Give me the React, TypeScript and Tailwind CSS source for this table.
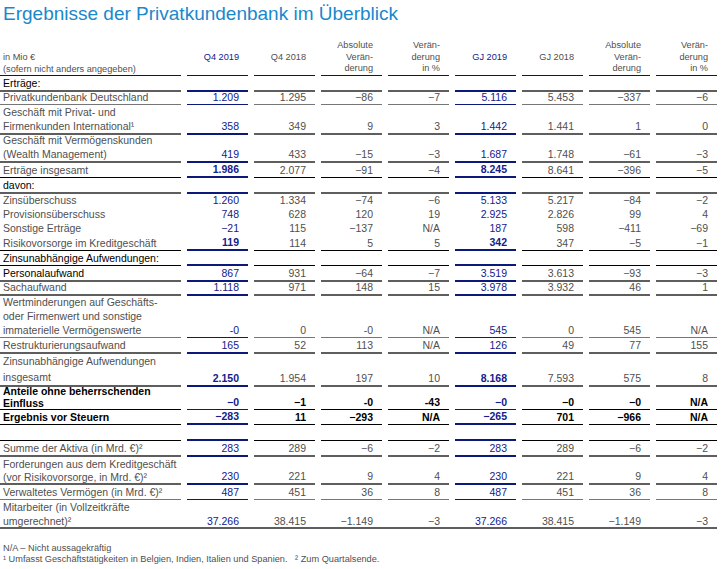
import React from "react";

type BK = "k1" | "g1" | "g2" | "n1" | "n2" | "none";

const BORDER: Record<BK, string> = {
  k1: "border-b border-black",
  g1: "border-b border-[#767676]",
  g2: "border-b-2 border-[#5e5e5e]",
  n1: "border-b border-[#0b1a7a]",
  n2: "border-b-2 border-[#0b1a7a]",
  none: "",
};

type Row = {
  label: string[];
  vals: string[];
  o: BK;
  hi: BK;
  h: string;
  lead?: string;
  black?: boolean;
  boldHi?: boolean;
  boldAll?: boolean;
  full?: boolean;
};

const E = ["", "", "", "", "", "", "", ""];

const rows: Row[] = [
  { label: ["Erträge:"], vals: E, o: "g2", hi: "n2", h: "h-[14px]", black: true },
  { label: ["Privatkundenbank Deutschland"], vals: ["1.209", "1.295", "−86", "−7", "5.116", "5.453", "−337", "−6"], o: "g1", hi: "n1", h: "h-[15px]" },
  { label: ["Geschäft mit Privat- und", "Firmenkunden International¹"], vals: ["358", "349", "9", "3", "1.442", "1.441", "1", "0"], o: "g2", hi: "n2", h: "h-[28px]" },
  { label: ["Geschäft mit Vermögenskunden", "(Wealth Management)"], vals: ["419", "433", "−15", "−3", "1.687", "1.748", "−61", "−3"], o: "g2", hi: "n2", h: "h-[29px]" },
  { label: ["Erträge insgesamt"], vals: ["1.986", "2.077", "−91", "−4", "8.245", "8.641", "−396", "−5"], o: "k1", hi: "n2", h: "h-[16px]", boldHi: true },
  { label: ["davon:"], vals: E, o: "g2", hi: "n2", h: "h-[15px]", black: true },
  { label: ["Zinsüberschuss"], vals: ["1.260", "1.334", "−74", "−6", "5.133", "5.217", "−84", "−2"], o: "none", hi: "none", h: "h-[14px]" },
  { label: ["Provisionsüberschuss"], vals: ["748", "628", "120", "19", "2.925", "2.826", "99", "4"], o: "none", hi: "none", h: "h-[14px]" },
  { label: ["Sonstige Erträge"], vals: ["−21", "115", "−137", "N/A", "187", "598", "−411", "−69"], o: "none", hi: "none", h: "h-[14px]" },
  { label: ["Risikovorsorge im Kreditgeschäft"], vals: ["119", "114", "5", "5", "342", "347", "−5", "−1"], o: "k1", hi: "n2", h: "h-[16px]", boldHi: true },
  { label: ["Zinsunabhängige Aufwendungen:"], vals: E, o: "k1", hi: "n2", h: "h-[15px]", black: true },
  { label: ["Personalaufwand"], vals: ["867", "931", "−64", "−7", "3.519", "3.613", "−93", "−3"], o: "g2", hi: "n2", h: "h-[14px]", black: true },
  { label: ["Sachaufwand"], vals: ["1.118", "971", "148", "15", "3.978", "3.932", "46", "1"], o: "g2", hi: "n2", h: "h-[15px]" },
  { label: ["Wertminderungen auf Geschäfts-", "oder Firmenwert und sonstige", "immaterielle Vermögenswerte"], vals: ["-0", "0", "-0", "N/A", "545", "0", "545", "N/A"], o: "g1", hi: "n1", h: "h-[43px]" },
  { label: ["Restrukturierungsaufwand"], vals: ["165", "52", "113", "N/A", "126", "49", "77", "155"], o: "g2", hi: "n2", h: "h-[15px]" },
  { label: ["Zinsunabhängige Aufwendungen", "insgesamt"], vals: ["2.150", "1.954", "197", "10", "8.168", "7.593", "575", "8"], o: "g2", hi: "n2", h: "h-[33px]", lead: "leading-[16px]", boldHi: true },
  { label: ["Anteile ohne beherrschenden", "Einfluss"], vals: ["−0", "−1", "-0", "-43", "−0", "−0", "−0", "N/A"], o: "k1", hi: "n1", h: "h-[23px]", lead: "leading-[11.5px]", black: true, boldAll: true },
  { label: ["Ergebnis vor Steuern"], vals: ["−283", "11", "−293", "N/A", "−265", "701", "−966", "N/A"], o: "k1", hi: "n2", h: "h-[16px]", black: true, boldAll: true },
  { label: [""], vals: E, o: "k1", hi: "n2", h: "h-[16px]" },
  { label: ["Summe der Aktiva (in Mrd. €)²"], vals: ["283", "289", "−6", "−2", "283", "289", "−6", "−2"], o: "g2", hi: "n2", h: "h-[16px]" },
  { label: ["Forderungen aus dem Kreditgeschäft", "(vor Risikovorsorge, in Mrd. €)²"], vals: ["230", "221", "9", "4", "230", "221", "9", "4"], o: "g2", hi: "n2", h: "h-[28px]", lead: "leading-[12.5px]" },
  { label: ["Verwaltetes Vermögen (in Mrd. €)²"], vals: ["487", "451", "36", "8", "487", "451", "36", "8"], o: "g1", hi: "n1", h: "h-[15px]" },
  { label: ["Mitarbeiter (in Vollzeitkräfte", "umgerechnet)²"], vals: ["37.266", "38.415", "−1.149", "−3", "37.266", "38.415", "−1.149", "−3"], o: "none", hi: "none", h: "h-[29px]", full: true },
];

const GRID = "grid grid-cols-[181px_repeat(8,minmax(0,1fr))] gap-x-[5.5px] w-[717px]";

function TableRow({ r }: { r: Row }) {
  const labelColor = r.black ? "text-black" : "text-[#4f4f4f]";
  const labelWeight = r.boldAll ? "font-bold" : "font-normal";
  return (
    <div className={`${GRID} ${r.h} ${r.full ? "border-b-2 border-[#5e5e5e]" : ""}`}>
      <div className={`flex flex-col justify-end pl-[3px] ${BORDER[r.o]} ${labelColor} ${labelWeight} ${r.lead ?? "leading-[14px]"} whitespace-nowrap`}>
        {r.label.map((l, i) => (
          <div key={i}>{l}</div>
        ))}
      </div>
      {r.vals.map((v, i) => {
        const isHi = i === 0 || i === 4;
        const bold = r.boldAll || (isHi && r.boldHi);
        const color = isHi ? "text-[#14208c]" : r.boldAll ? "text-black" : "text-[#4f4f4f]";
        return (
          <div
            key={i}
            className={`flex items-end justify-end pr-[9px] leading-[14px] ${isHi ? BORDER[r.hi] : BORDER[r.o]} ${color} ${bold ? "font-bold" : "font-normal"}`}
          >
            {v}
          </div>
        );
      })}
    </div>
  );
}

function HeadCell({ lines, hi }: { lines: string[]; hi?: boolean }) {
  return (
    <div className={`flex flex-col justify-center items-end pr-[9px] border-b border-[#1a1a1a] leading-[11.5px] ${hi ? "text-[#14208c]" : "text-[#4f4f4f]"}`}>
      {lines.map((l, i) => (
        <div key={i}>{l}</div>
      ))}
    </div>
  );
}

export default function App() {
  return (
    <div className="w-[723px] h-[569px] bg-white font-['Liberation_Sans',Arial,sans-serif] text-[10.5px] overflow-hidden">
      <div className="h-[40px] pl-[3px] pt-[2px]">
        <div className="text-[19px] leading-[24px] text-[#1a88cc] whitespace-nowrap">
          Ergebnisse der Privatkundenbank im Überblick
        </div>
      </div>
      <div className={`${GRID} h-[36px] text-[9.2px]`}>
        <div className="flex flex-col justify-end pl-[3px] border-b border-[#1a1a1a] leading-[11.5px] text-[#4f4f4f] whitespace-nowrap">
          <div>in Mio €</div>
          <div>(sofern nicht anders angegeben)</div>
        </div>
        <HeadCell lines={["Q4 2019"]} hi />
        <HeadCell lines={["Q4 2018"]} />
        <HeadCell lines={["Absolute", "Verän-", "derung"]} />
        <HeadCell lines={["Verän-", "derung", "in %"]} />
        <HeadCell lines={["GJ 2019"]} hi />
        <HeadCell lines={["GJ 2018"]} />
        <HeadCell lines={["Absolute", "Verän-", "derung"]} />
        <HeadCell lines={["Verän-", "derung", "in %"]} />
      </div>
      {rows.map((r, i) => (
        <TableRow key={i} r={r} />
      ))}
      <div className="mt-[14px] pl-[3px] text-[9.2px] leading-[11px] text-[#4f4f4f] whitespace-nowrap">
        <div>N/A – Nicht aussagekräftig</div>
        <div>
          ¹ Umfasst Geschäftstätigkeiten in Belgien, Indien, Italien und Spanien.&nbsp;&nbsp; ² Zum Quartalsende.
        </div>
      </div>
    </div>
  );
}
